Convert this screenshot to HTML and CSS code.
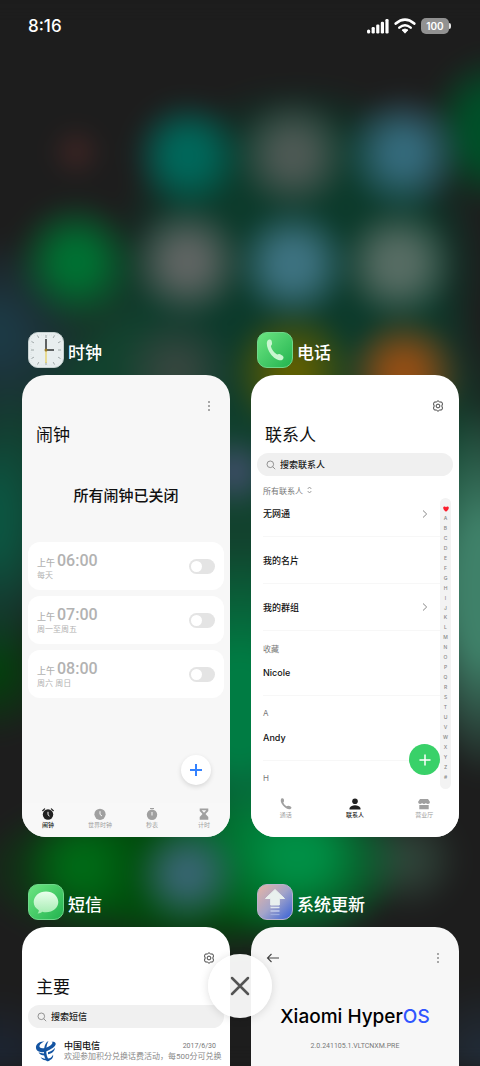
FILE: index.html
```html
<!DOCTYPE html>
<html lang="zh-CN">
<head>
    <meta charset="UTF-8">
    <meta name="viewport" content="width=device-width, initial-scale=1.0">
    <title>最近任务</title>
    <link rel="stylesheet" href="styles.css">
</head>
<body>
    <svg class="defs" aria-hidden="true">
        <symbol id="gear" viewBox="0 0 12 12">
            <path d="M6 .7 7.700 2h2l.8 1.900-.7 2.100.7 2.100L9.700 10H7.700L6 11.300 4.300 10h-2L1.500 8.100 2.200 6 1.500 3.900 2.300 2h2z" fill="none" stroke="currentColor" stroke-width="1" stroke-linejoin="round"/>
            <circle cx="6" cy="6" r="1.900" fill="none" stroke="currentColor"/>
        </symbol>
        <symbol id="search" viewBox="0 0 10 10">
            <circle cx="4.300" cy="4.300" r="3.300" fill="none" stroke="currentColor" stroke-width=".9"/>
            <path d="M6.700 6.700 9.200 9.200" stroke="currentColor" stroke-width=".9"/>
        </symbol>
        <symbol id="dots" viewBox="0 0 12 12">
            <circle cx="6" cy="2" r=".8"/><circle cx="6" cy="6" r=".8"/><circle cx="6" cy="10" r=".8"/>
        </symbol>
        <symbol id="chevron" viewBox="0 0 6 10">
            <path d="M1 1.500 4.700 5 1 8.500" fill="none" stroke="currentColor" stroke-width="1"/>
        </symbol>
        <symbol id="handset" viewBox="0 0 20 24">
            <path d="M1.500 2.300C2.500.8 4.900.4 5.600 1.700c.6 1.300.9 3 .7 4.300-.2 1-1.300 1.300-1.100 2.300.5 2.600 3.300 6.500 6.100 8.200.9.500 1.600-.4 2.600-.2 1.300.3 3.200 1.400 4.200 2.500.9 1.100-.1 3.400-1.800 3.900-3.300.9-8.200-2.200-11.200-6.200C1.900 12.300-.3 5.300 1.500 2.300z" fill="currentColor"/>
        </symbol>
    </svg>

    <div class="screen">
        <header class="status-bar">
            <span class="time">8:16</span>
            <div class="status-icons">
                <svg width="22" height="16" viewBox="0 0 22 16" fill="#fff">
                    <rect x="0" y="11.500" width="3.200" height="4" rx="1.500"/>
                    <rect x="4.600" y="9" width="3.200" height="6.500" rx="1.200"/>
                    <rect x="9.200" y="6.500" width="3.200" height="9" rx="1.200"/>
                    <rect x="13.800" y="3.800" width="3.200" height="11.700" rx="1.200"/>
                    <rect x="18.400" y="1" width="3.200" height="14.500" rx="1.200"/>
                </svg>
                <svg width="22" height="16" viewBox="0 0 22 16" fill="none" stroke="#fff">
                    <path d="M1.800 5.500Q11-2.200 20.200 5.500" stroke-width="2.800" stroke-linecap="round"/>
                    <path d="M5.300 9.600Q11 4.800 16.700 9.600" stroke-width="2.500" stroke-linecap="round"/>
                    <path d="M8 12q3-2.200 6 0l-3 3.200z" fill="#fff" stroke="#fff" stroke-width=".8" stroke-linejoin="round"/>
                </svg>
                <span class="battery">100</span>
            </div>
        </header>

        <main class="tasks">
            <section class="task">
                <h2 class="task-name">
                    <svg class="app-icon" viewBox="0 0 36 36">
                        <rect x=".5" y=".5" width="35" height="35" rx="9.500" fill="#e8eeef" stroke="#c5d0d0"/>
                        <path d="M18 3v3M18 30v3M3 18h3M30 18h3M9.500 3.500l1.300 2.400M26.500 3.500l-1.300 2.400M9.500 32.500l1.300-2.400M26.500 32.500l-1.300-2.400M3.500 9.500l2.400 1.300M32.500 9.500l-2.400 1.300M3.500 26.500l2.400-1.300M32.500 26.500l-2.400-1.300" stroke="#8b9495" stroke-width=".8"/>
                        <rect x="3" y="3" width="30" height="30" rx="6" fill="none" stroke="#bcc3c4" stroke-width=".5" stroke-dasharray=".5 1.500"/>
                        <path d="M18 18V7M18 18h8" stroke="#303536" stroke-width="1.500"/>
                        <path d="M18 17v14" stroke="#e8cf55" stroke-width="1.200"/>
                        <circle cx="18" cy="18" r="1.500" fill="#9a7925"/>
                    </svg>
                    时钟
                </h2>
                <article class="card card-gray">
                    <div class="toolbar">
                        <button class="icon-btn" aria-label="更多"><svg width="12" height="12"><use href="#dots"/></svg></button>
                    </div>
                    <h3 class="card-title">闹钟</h3>
                    <p class="alarm-state">所有闹钟已关闭</p>
                    <div class="alarms">
                        <label class="alarm">
                            <span><span class="alarm-time"><small>上午</small>06:00</span><span class="alarm-days">每天</span></span>
                            <input class="switch" type="checkbox">
                        </label>
                        <label class="alarm">
                            <span><span class="alarm-time"><small>上午</small>07:00</span><span class="alarm-days">周一至周五</span></span>
                            <input class="switch" type="checkbox">
                        </label>
                        <label class="alarm">
                            <span><span class="alarm-time"><small>上午</small>08:00</span><span class="alarm-days">周六 周日</span></span>
                            <input class="switch" type="checkbox">
                        </label>
                    </div>
                    <button class="fab fab-white" aria-label="添加闹钟">
                        <svg width="14" height="14" viewBox="0 0 14 14"><path d="M7 1v12M1 7h12" stroke="#3482ff" stroke-width="2"/></svg>
                    </button>
                    <nav class="tabs tabs-clock">
                        <a class="tab active" href="#alarm">
                            <svg width="12" height="12" viewBox="0 0 12 12"><circle cx="6" cy="6.500" r="5.200"/><path d="M.7 2.700 2.600.9M11.300 2.700 9.400.9" stroke="currentColor" stroke-width="1.200" stroke-linecap="round"/><path d="M6 3.800v3l1.500 1.300" fill="none" stroke="#f8f8f8"/></svg>
                            闹钟
                        </a>
                        <a class="tab" href="#world">
                            <svg width="12" height="12" viewBox="0 0 12 12"><circle cx="6" cy="6.300" r="5.600"/><path d="M6 3.200v3.200L8 8" fill="none" stroke="#f8f8f8"/></svg>
                            世界时钟
                        </a>
                        <a class="tab" href="#stopwatch">
                            <svg width="12" height="12" viewBox="0 0 12 12"><circle cx="6" cy="6.800" r="5.200"/><path d="M4 .5h4" stroke="currentColor"/><path d="M6 4v3.500" stroke="#f8f8f8"/></svg>
                            秒表
                        </a>
                        <a class="tab" href="#timer">
                            <svg width="12" height="12" viewBox="0 0 12 12"><path d="M1.700.5h8.600v2.500L7.500 6l2.800 3v2.700H1.700V9l2.800-3L1.700 3z"/><path d="M3.700 2.300h4.600L6 4.800z" fill="#f8f8f8"/></svg>
                            计时
                        </a>
                    </nav>
                </article>
            </section>

            <section class="task">
                <h2 class="task-name">
                    <svg class="app-icon" viewBox="0 0 36 36">
                        <defs>
                            <linearGradient id="green" x1="0" y1="0" x2="1" y2="1"><stop stop-color="#6de582"/><stop offset="1" stop-color="#22b34f"/></linearGradient>
                            <linearGradient id="pale" x1="0" y1="0" x2="0" y2="1"><stop stop-color="#e9ffec"/><stop offset="1" stop-color="#a5ecb2"/></linearGradient>
                        </defs>
                        <rect x=".5" y=".5" width="35" height="35" rx="9.500" fill="url(#green)" stroke="#6fd78a"/>
                        <svg x="9" y="6" width="19" height="24" color="#c9f6d0"><use href="#handset"/></svg>
                    </svg>
                    电话
                </h2>
                <article class="card">
                    <div class="toolbar">
                        <button class="icon-btn" aria-label="设置"><svg width="12" height="12"><use href="#gear"/></svg></button>
                    </div>
                    <h3 class="card-title">联系人</h3>
                    <label class="search">
                        <svg width="10" height="10"><use href="#search"/></svg>
                        <input type="search" placeholder="搜索联系人" aria-label="搜索联系人">
                    </label>
                    <div class="contacts">
                        <div class="contact-list">
                            <p class="group">所有联系人
                                <svg width="5" height="8" viewBox="0 0 5 8" fill="none" stroke="#888" stroke-width=".8"><path d="M.7 3 2.500 1l1.800 2M.7 5l1.800 2 1.800-2"/></svg>
                            </p>
                            <a class="contact contact-short" href="#sim">无网通<svg width="6" height="10"><use href="#chevron"/></svg></a>
                            <a class="contact" href="#me">我的名片</a>
                            <a class="contact" href="#groups">我的群组<svg width="6" height="10"><use href="#chevron"/></svg></a>
                            <p class="group">收藏</p>
                            <a class="contact contact-short" href="#nicole">Nicole</a>
                            <p class="group">A</p>
                            <a class="contact contact-short" href="#andy">Andy</a>
                            <p class="group">H</p>
                        </div>
                        <div class="index">
                            <svg width="6" height="6" viewBox="0 0 6 6"><path d="M3 5.700C-.8 3-.2.4 1.500.4 2.300.4 2.800.8 3 1.200 3.200.8 3.700.4 4.500.4 6.200.4 6.800 3 3 5.700z" fill="#fb1e2d"/></svg>
                            <span>A</span><span>B</span><span>C</span><span>D</span><span>E</span><span>F</span><span>G</span><span>H</span><span>I</span><span>J</span><span>K</span><span>L</span><span>M</span><span>N</span><span>O</span><span>P</span><span>Q</span><span>R</span><span>S</span><span>T</span><span>U</span><span>V</span><span>W</span><span>X</span><span>Y</span><span>Z</span><span>#</span>
                        </div>
                    </div>
                    <button class="fab fab-green" aria-label="新建联系人">
                        <svg width="14" height="14" viewBox="0 0 14 14"><path d="M7 2v10M2 7h10" stroke="#fff" stroke-width="1.500" stroke-linecap="round"/></svg>
                    </button>
                    <nav class="tabs tabs-phone">
                        <a class="tab" href="#calls">
                            <svg width="12" height="12" viewBox="0 0 12 12"><path d="M1.200.8C2 .1 3.300.2 3.700 1.100c.3.700.4 1.500.3 2.200-.1.600-.8.800-.6 1.400.5 1.300 1.700 2.700 3.200 3.500.5.300.9-.4 1.500-.4.800 0 2 .4 2.900 1 .7.500.5 1.800-.5 2.300-2 .8-5.200-.8-7.500-3.500C.8 5 .2 2 1.200.8z"/></svg>
                            通话
                        </a>
                        <a class="tab active" href="#contacts">
                            <svg width="12" height="12" viewBox="0 0 12 12"><circle cx="6" cy="3.200" r="2.800"/><path d="M.5 11.500V10Q2.300 7.200 6 7.200T11.500 10v1.500z"/></svg>
                            联系人
                        </a>
                        <a class="tab" href="#store">
                            <svg width="12" height="12" viewBox="0 0 12 12"><path d="M2 .9h8l2 3q-.2 2-2 2T8 5Q6 6.900 4 5 3.500 5.900 2 5.900T0 3.900z"/><path d="M1.300 7h9.400v4.300H1.300z"/></svg>
                            营业厅
                        </a>
                    </nav>
                </article>
            </section>

            <section class="task">
                <h2 class="task-name">
                    <svg class="app-icon" viewBox="0 0 36 36">
                        <rect x=".5" y=".5" width="35" height="35" rx="9.500" fill="url(#green)" stroke="#6fd78a"/>
                        <path d="M18 7.500c7 0 12.300 4.700 12.300 10.500S25 28.300 18 28.300c-1.300 0-2.500-.1-3.700-.5-1.300 1-3 1.700-4.800 1.600.9-.9 1.300-2 1.300-3.200C7.500 24.300 5.700 21.400 5.700 18 5.700 12.200 11 7.500 18 7.500z" fill="url(#pale)"/>
                    </svg>
                    短信
                </h2>
                <article class="card">
                    <div class="toolbar">
                        <button class="icon-btn" aria-label="设置"><svg width="12" height="12"><use href="#gear"/></svg></button>
                    </div>
                    <h3 class="card-title">主要</h3>
                    <label class="search">
                        <svg width="10" height="10"><use href="#search"/></svg>
                        <input type="search" placeholder="搜索短信" aria-label="搜索短信">
                    </label>
                    <a class="message" href="#telecom">
                        <svg class="avatar" viewBox="0 0 22 22" fill="#1354a2">
                            <path d="M9.500 1.500C4.500.8.500 4 1 8c.4 3.800 5.500 5.300 10.500 3.200C16 9.500 20.500 6.500 20.700 4c.1-2-2.200-2.500-4.200-2.200 1.600.5 1.200 1.900-.8 3.400C12.500 7.600 6.800 9.500 5 7.600 3.300 5.700 6 2.800 9.500 1.500z"/>
                            <path d="M13.500 1C10 2.500 8.500 8 9 14c.3 3 1.200 5.500 3 7.200 1 .3 2.200 0 2.700-.6C12 18 11 14 11.300 9.500 11.500 6 12.200 3 13.500 1z"/>
                            <path d="M3.500 12.300c2 1 4.500 1.300 6.500 1l.2 2.200c-2.800.2-5.500-.9-6.700-3.200zM5.500 17c2 1.700 6.500 2.300 9 1.300 1.700-.7 3-2 3.500-3.800.8 3-1.500 5.500-4.500 6-3.300.5-6.700-.8-8-3.500zM13 12.300c3-.7 5.500-2.500 7-4.500-.3 3.500-3.500 6-7 6.500z"/>
                        </svg>
                        <span class="message-body">
                            <span class="message-head"><b>中国电信</b><time>2017/6/30</time></span>
                            <span class="message-text">欢迎参加积分兑换话费活动，每500分可兑换</span>
                        </span>
                    </a>
                </article>
            </section>

            <section class="task">
                <h2 class="task-name">
                    <svg class="app-icon" viewBox="0 0 36 36">
                        <defs>
                            <linearGradient id="dusk" x1="0" y1="0" x2="1" y2="1"><stop stop-color="#e9b5a4"/><stop offset=".5" stop-color="#a3a4c9"/><stop offset="1" stop-color="#3460d8"/></linearGradient>
                        </defs>
                        <rect x=".5" y=".5" width="35" height="35" rx="9.500" fill="url(#dusk)" stroke="#b8b3cc"/>
                        <path d="M18 5.500 27.500 14.500H22.300V21H13.700V14.500H8.500z" fill="#e9f0ee" stroke="#e9f0ee" stroke-linejoin="round"/>
                        <path d="M13.500 23.500h9" stroke="#dfe6ef" stroke-width="1.500"/>
                        <path d="M13.500 27h9" stroke="#c3cdeb" stroke-width="1.500"/>
                        <path d="M13.500 30.500h9" stroke="#9cace0" stroke-width="1.200"/>
                    </svg>
                    系统更新
                </h2>
                <article class="card card-gray">
                    <div class="toolbar">
                        <button class="icon-btn back" aria-label="返回">
                            <svg width="14" height="12" viewBox="0 0 14 12" fill="none" stroke="#444" stroke-width="1.100"><path d="M13 6H1.500M5.500 2 1.500 6l4 4"/></svg>
                        </button>
                        <button class="icon-btn" aria-label="更多"><svg width="12" height="12"><use href="#dots"/></svg></button>
                    </div>
                    <h3 class="os-name">Xiaomi Hyper<span>OS</span></h3>
                    <p class="os-version">2.0.241105.1.VLTCNXM.PRE</p>
                </article>
            </section>
        </main>

        <button class="close-all" aria-label="全部清除">
            <svg width="20" height="20" viewBox="0 0 20 20"><path d="M2 2 18 18M18 2 2 18" stroke="#555" stroke-width="2.500" stroke-linecap="round"/></svg>
        </button>
    </div>
</body>
</html>
```
FILE: styles.css
```css
* {
    box-sizing: border-box;
    margin: 0;
    padding: 0;
}
body {
    font-family: Inter, "Noto Sans CJK SC", sans-serif;
    background-color: #1d1d1d;
    color: #111;
}
button {
    border: none;
    background: none;
    cursor: pointer;
}
a {
    color: inherit;
    text-decoration: none;
}
svg {
    display: block;
    flex-shrink: 0;
}
.defs {
    display: none;
}
.screen {
    position: relative;
    z-index: 0;
    height: 100vh;
    overflow: hidden;
    background: #1d1d1d;
}

/* blurred home screen behind the cards */
.screen::before {
    content: "";
    position: absolute;
    inset: 0 -24px;
    z-index: -1;
    filter: blur(10px);
    background:
        radial-gradient(circle at 19% 152px, #3c2423 4px, transparent 28px),
        radial-gradient(circle at 40% 155px, #00675a 18px, transparent 58px),
        radial-gradient(circle at 60% 155px, #4d5954 16px, transparent 60px),
        radial-gradient(circle at 81% 153px, #346a7b 16px, transparent 62px),
        radial-gradient(circle at 19% 262px, #007032 18px, transparent 64px),
        radial-gradient(circle at 40% 262px, #5e6462 16px, transparent 60px),
        radial-gradient(circle at 60% 264px, #3d7280 18px, transparent 60px),
        radial-gradient(circle at 80% 264px, #566c63 18px, transparent 60px),
        radial-gradient(circle at 81% 374px, #924e15 16px, transparent 60px),
        radial-gradient(circle at 60% 372px, #605f00 12px, transparent 66px),
        radial-gradient(circle at 38% 370px, #36463f 10px, transparent 60px),
        radial-gradient(circle at 20% 866px, #006a16 12px, transparent 60px),
        radial-gradient(circle at 40% 874px, #36656f 14px, transparent 56px),
        radial-gradient(ellipse 110px 90px at 61% 856px, #008f45 20%, transparent),
        radial-gradient(circle at 82% 860px, #2f4238 10px, transparent 54px),
        radial-gradient(circle at 49% 472px, #444f70, transparent 40px),
        radial-gradient(ellipse 70px 190px at 96% 590px, #3f8169 35%, transparent),
        radial-gradient(ellipse 60px 150px at 4% 520px, #0c5541 20%, transparent),
        radial-gradient(ellipse 90px 100px at 4% 335px, #1c3944 20%, transparent),
        radial-gradient(ellipse 70px 80px at 98% 130px, #004f28 40%, transparent),
        radial-gradient(circle at 4% 1060px, #1c2636, transparent 70px),
        radial-gradient(circle at 97% 1060px, #222e3c, transparent 80px),
        radial-gradient(ellipse 120px 170px at 50% 710px, #007c43 30%, transparent),
        radial-gradient(ellipse 70px 70px at 3% 670px, #00440b, transparent),
        radial-gradient(ellipse 220px 90px at 41% 870px, #004d0c 50%, transparent),
        radial-gradient(ellipse 190px 190px at 61% 270px, #0c3a2b 70%, transparent),
        radial-gradient(ellipse 280px 260px at 52% 470px, #12422e 70%, transparent),
        #1d1d1d;
}
.status-bar {
    display: flex;
    justify-content: space-between;
    align-items: center;
    height: 52px;
    padding: 0 31px 0 28px;
    color: #fff;
}
.time {
    font-size: 17px;
    font-weight: 500;
}
.status-icons {
    display: flex;
    align-items: center;
    gap: 5px;
}
.battery {
    position: relative;
    width: 28px;
    border-radius: 5px;
    background: #919191;
    font-size: 10px;
    font-weight: 600;
    line-height: 16px;
    text-align: center;
}
.battery::after {
    content: "";
    position: absolute;
    left: 28px;
    top: 5px;
    width: 2px;
    height: 6px;
    border-radius: 0 2px 2px 0;
    background: #e5e5e5;
}

.tasks {
    display: grid;
    grid-template-columns: repeat(2, minmax(0, 1fr));
    gap: 47px 21px;
    padding: 280px 21px 0 22px;
}
.task-name {
    display: flex;
    align-items: flex-end;
    gap: 4px;
    height: 43px;
    padding: 0 6px 7px;
    color: #fff;
    font-size: 17px;
    font-weight: 500;
    line-height: 30px;
}
.app-icon {
    width: 36px;
    height: 36px;
}
.card {
    position: relative;
    height: 462px;
    border-radius: 24px;
    background: #fff;
    overflow: hidden;
}
.card-gray {
    background: #f7f7f7;
}
.toolbar {
    display: flex;
    align-items: center;
    height: 40px;
    padding: 22px 15px 0;
}
.icon-btn {
    margin-left: auto;
    color: #444;
    fill: #444;
}
.icon-btn.back {
    margin-left: 0;
}
.card-title {
    margin: 8px 14px 0;
    font-size: 17px;
    font-weight: 400;
    line-height: 24px;
}
.search {
    display: flex;
    align-items: center;
    gap: 4px;
    height: 23px;
    margin: 6px 6px 0;
    padding: 0 9px;
    border-radius: 12px;
    background: #f0f0f0;
    color: #888;
}
.search input {
    flex: 1;
    min-width: 0;
    border: none;
    background: none;
    font: 500 9px/14px Inter, "Noto Sans CJK SC", sans-serif;
}
.search input::placeholder {
    color: #222;
}

/* clock */
.alarm-state {
    margin-top: 38px;
    font-size: 15px;
    font-weight: 500;
    line-height: 22px;
    text-align: center;
}
.alarms {
    display: grid;
    gap: 6px;
    padding: 35px 6px 0;
}
.alarm {
    display: flex;
    align-items: center;
    justify-content: space-between;
    height: 48px;
    padding: 0 9px;
    border-radius: 12px;
    background: #fff;
    color: #b2b2b2;
}
.alarm-time {
    display: flex;
    align-items: baseline;
    gap: 2px;
    height: 18px;
    font: 500 16px/18px Roboto, "Noto Sans CJK SC", sans-serif;
}
.alarm-time small {
    font-size: 9px;
}
.alarm-days {
    display: block;
    font-size: 8px;
    line-height: 10px;
}
.switch {
    appearance: none;
    display: flex;
    align-items: center;
    width: 26px;
    height: 15px;
    padding: 0 2px;
    border-radius: 8px;
    background: #e4e4e4;
}
.switch::before {
    content: "";
    width: 11px;
    height: 11px;
    border-radius: 50%;
    background: #fff;
}
.fab {
    position: absolute;
    display: grid;
    place-items: center;
    width: 30px;
    height: 30px;
    border-radius: 50%;
}
.fab-white {
    right: 19px;
    bottom: 52px;
    background: #fff;
    box-shadow: 0 2px 5px #0002;
}
.fab-green {
    right: 19px;
    bottom: 62px;
    width: 31px;
    height: 31px;
    background: #39d169;
}
.tabs {
    position: absolute;
    left: 0;
    right: 0;
    bottom: 0;
    display: flex;
}
.tabs-clock {
    height: 34px;
    padding-top: 5px;
    background: #f8f8f8;
}
.tabs-phone {
    height: 46px;
    padding-top: 7px;
    background: #fff;
}
.tab {
    flex: 1;
    display: flex;
    flex-direction: column;
    align-items: center;
    font-size: 6px;
    line-height: 10px;
    color: #a0a0a0;
    fill: currentColor;
}
.tab.active {
    color: #222;
    font-weight: 500;
}

/* contacts */
.contacts {
    display: grid;
    grid-template-columns: 1fr 11px;
    padding: 0 8px 0 12px;
}
.group {
    display: flex;
    align-items: center;
    gap: 4px;
    height: 29px;
    padding-top: 5px;
    font-size: 8px;
    color: #777;
}
.group:first-child {
    height: 25px;
    padding-top: 3px;
}
.contact {
    display: flex;
    align-items: center;
    justify-content: space-between;
    height: 47px;
    padding-right: 12px;
    border-bottom: 1px solid #f7f7f7;
    font-size: 9px;
    font-weight: 500;
}
.contact svg {
    color: #888;
}
.contact-short {
    height: 36px;
    padding-bottom: 10px;
}
.index {
    display: flex;
    flex-direction: column;
    align-items: center;
    justify-content: space-between;
    height: 291px;
    margin-top: 22px;
    padding: 8px 0;
    border-radius: 6px;
    background: #f3f3f3;
    font-size: 5px;
    font-weight: 500;
    line-height: 8px;
    color: #888;
}

/* messages */
.message {
    display: flex;
    align-items: center;
    gap: 7px;
    padding: 12px 14px 0 13px;
}
.avatar {
    width: 22px;
    height: 22px;
}
.message-body {
    flex: 1;
    min-width: 0;
}
.message-head {
    display: flex;
    align-items: center;
    justify-content: space-between;
    line-height: 12px;
}
.message-head b {
    font-size: 9px;
    font-weight: 500;
}
.message-head time {
    font-family: Roboto, sans-serif;
    font-size: 7px;
    color: #777;
}
.message-text {
    display: block;
    font-family: Roboto, "Noto Sans CJK SC", sans-serif;
    font-size: 8px;
    line-height: 10px;
    color: #888;
    white-space: nowrap;
}

/* system update */
.os-name {
    margin-top: 36px;
    color: #000;
    font-size: 19px;
    font-weight: 500;
    line-height: 28px;
    text-align: center;
}
.os-name span {
    color: #2f55ff;
}
.os-version {
    margin-top: 9px;
    font-family: Roboto, sans-serif;
    font-size: 7px;
    line-height: 12px;
    text-align: center;
    color: #777;
}

.close-all {
    position: absolute;
    left: calc(50% - 32px);
    bottom: 48px;
    display: grid;
    place-items: center;
    width: 64px;
    height: 64px;
    border-radius: 50%;
    background: #fffffff0;
    box-shadow: 0 1px 10px #0002;
}
```
